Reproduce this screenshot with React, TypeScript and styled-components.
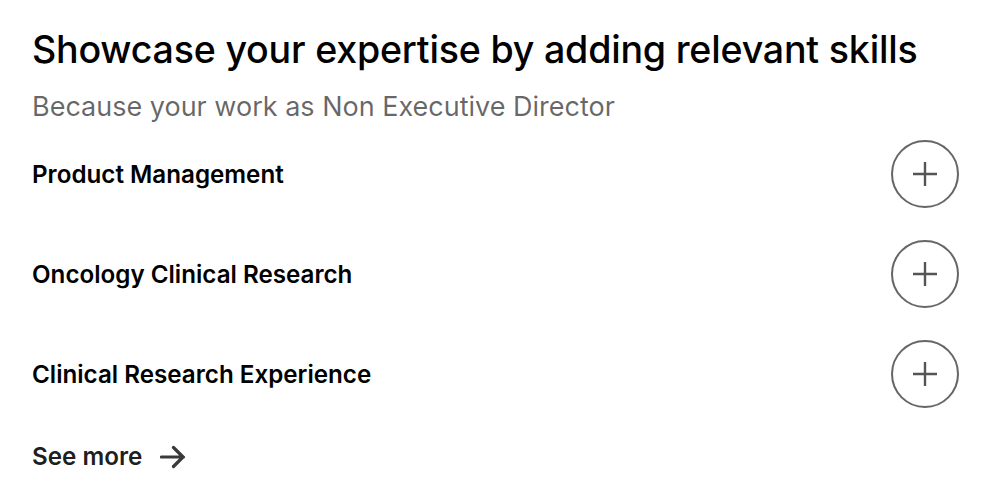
import React from "react";
import styled, { createGlobalStyle } from "styled-components";

const Global = createGlobalStyle`
  html, body { margin: 0; padding: 0; background: #fff; }
  body { font-family: Inter, "Noto Sans", sans-serif; -webkit-font-smoothing: antialiased; }
`;

const Card = styled.section`
  width: 986px;
  height: 490px;
  box-sizing: border-box;
  padding: 26px 27px 0 32px;
  display: flex;
  flex-direction: column;
`;

const Title = styled.h1`
  margin: 0;
  font-size: 37.6px;
  line-height: 48px;
  font-weight: 500;
  color: #000;
  letter-spacing: -0.2px;
`;

const Subtitle = styled.p`
  margin: 15px 0 0;
  font-size: 27px;
  line-height: 36px;
  font-weight: 400;
  color: rgba(0, 0, 0, 0.6);
`;

const List = styled.ul`
  list-style: none;
  margin: 15px 0 0;
  padding: 0;
  display: flex;
  flex-direction: column;
  gap: 32px;
`;

const Row = styled.li`
  display: flex;
  align-items: center;
  justify-content: space-between;
  height: 68px;
`;

const SkillName = styled.span`
  font-size: 24.2px;
  font-weight: 600;
  color: #000;
`;

const AddButton = styled.button`
  width: 68px;
  height: 68px;
  border-radius: 50%;
  border: 2px solid #666;
  background: #fff;
  display: flex;
  align-items: center;
  justify-content: center;
  padding: 0;
  cursor: pointer;
`;

const SeeMore = styled.button`
  margin-top: 34px;
  display: flex;
  align-items: center;
  gap: 18px;
  background: none;
  border: none;
  padding: 0;
  font-family: inherit;
  font-size: 24.2px;
  line-height: 29px;
  font-weight: 600;
  color: rgba(0, 0, 0, 0.9);
  align-self: flex-start;
`;

const Plus = () => (
  <svg width="28" height="28" viewBox="0 0 28 28">
    <path d="M14 2v24M2 14h24" stroke="#555" strokeWidth="2.4" fill="none" />
  </svg>
);

const Arrow = () => (
  <svg width="27" height="24" viewBox="0 0 27 24">
    <path d="M1.5 12h22M13.5 2.5l9.5 9.5-9.5 9.5" stroke="#3a3a3a" strokeWidth="3.2" fill="none" strokeLinejoin="round" strokeLinecap="round" />
  </svg>
);

const skills = ["Product Management", "Oncology Clinical Research", "Clinical Research Experience"];

export default function App() {
  return (
    <>
      <Global />
      <Card>
        <Title>Showcase your expertise by adding relevant skills</Title>
        <Subtitle>Because your work as Non Executive Director</Subtitle>
        <List>
          {skills.map((s) => (
            <Row key={s}>
              <SkillName>{s}</SkillName>
              <AddButton aria-label={`Add ${s}`}>
                <Plus />
              </AddButton>
            </Row>
          ))}
        </List>
        <SeeMore>
          See more <Arrow />
        </SeeMore>
      </Card>
    </>
  );
}
